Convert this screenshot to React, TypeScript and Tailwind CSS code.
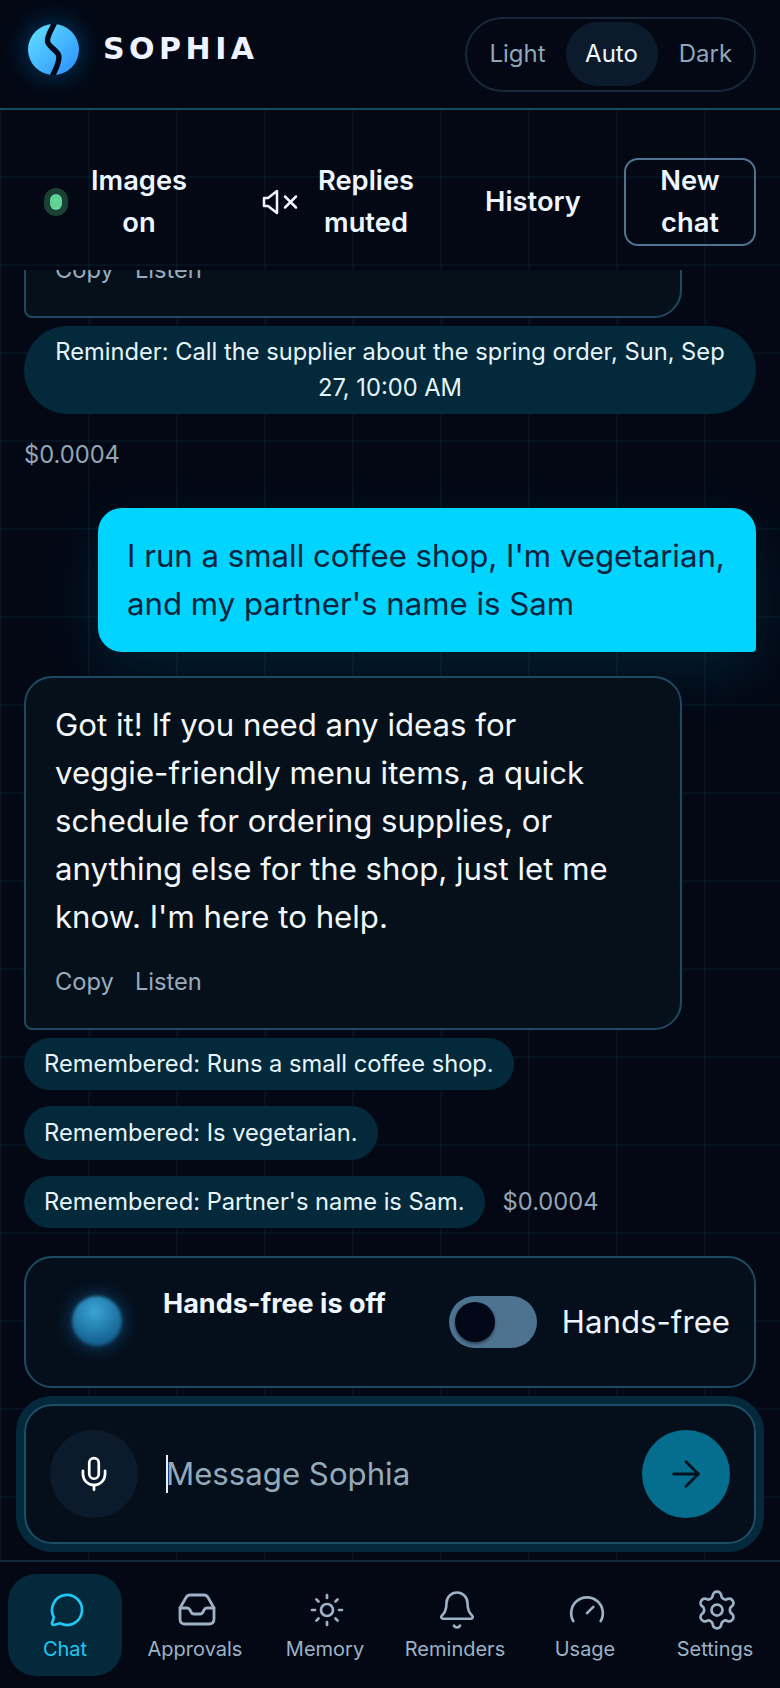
import { MessageCircle, Sun, Bell, Gauge, Settings, Mic, ArrowRight } from "lucide-react";

const font = { fontFamily: "Inter, 'Noto Sans', sans-serif" };

function Logo() {
  return (
    <div className="h-[51px] w-[51px] shrink-0 rounded-full shadow-[0_0_28px_rgba(0,150,255,0.4)]">
      <svg viewBox="0 0 52 52" className="h-full w-full">
        <defs>
          <linearGradient id="orb" x1="0" y1="0" x2="1" y2="1">
            <stop offset="0" stopColor="#63e4ff" />
            <stop offset="1" stopColor="#2a8cff" />
          </linearGradient>
        </defs>
        <circle cx="26" cy="26" r="26" fill="url(#orb)" />
        <path d="M27 -1C24 6 19 12 20 18C21 24 31 27 31.5 33C32 40 28 46 25 53" fill="none" stroke="#03091a" strokeWidth="5.5" />
      </svg>
    </div>
  );
}

function MutedSpeaker() {
  return (
    <svg viewBox="0 0 36 26" fill="none" stroke="currentColor" strokeWidth="2.5" strokeLinecap="round" strokeLinejoin="round" className="h-[26px] w-[36px] shrink-0">
      <path d="M2 9H6L15 2V24L6 17H2Z" />
      <path d="M23 7.5L34 18.5M34 7.5L23 18.5" />
    </svg>
  );
}

function InboxTray({ className }: { className?: string }) {
  return (
    <svg viewBox="0 0 40 34" fill="none" stroke="currentColor" strokeWidth="2.8" strokeLinecap="round" strokeLinejoin="round" className={className}>
      <path d="M3 15L9 4.5Q10.5 2 13 2H27Q29.5 2 31 4.5L37 15V26Q37 31 32 31H8Q3 31 3 26Z" />
      <path d="M3 15H10Q12 15 13 17L14 19Q15 21 17 21H23Q25 21 26 19L27 17Q28 15 30 15H37" />
    </svg>
  );
}

const navItems = [
  { label: "Chat", icon: MessageCircle, size: "h-[36px] w-[36px]", stroke: 1.8, active: true },
  { label: "Approvals", icon: InboxTray, size: "h-[34px] w-[40px]", stroke: 1.7 },
  { label: "Memory", icon: Sun, size: "h-[36px] w-[36px]", stroke: 1.8 },
  { label: "Reminders", icon: Bell, size: "h-[42px] w-[42px]", stroke: 1.5 },
  { label: "Usage", icon: Gauge, size: "h-[38px] w-[38px]", stroke: 1.7 },
  { label: "Settings", icon: Settings, size: "h-[44px] w-[44px]", stroke: 1.5 },
];

function ReplyActions() {
  return (
    <div className="text-[23.7px] leading-8 text-[#98abbd]">
      <span className="mr-[21px]">Copy</span>
      <span>Listen</span>
    </div>
  );
}

export default function App() {
  return (
    <div style={font} className="flex h-[1688px] w-[780px] flex-col overflow-hidden bg-[#030814] bg-[linear-gradient(rgba(32,120,140,0.09)_2px,transparent_2px),linear-gradient(90deg,rgba(32,120,140,0.09)_2px,transparent_2px)] bg-[size:88px_88px] text-white">
      {/* Brand bar */}
      <header className="flex h-[110px] shrink-0 items-center justify-between border-b-2 border-[#154a60] bg-[#030814] pl-7 pr-[24px]">
        <div className="flex items-center gap-[24px] pb-[9px]">
          <Logo />
          <span style={{ fontFamily: "'DejaVu Sans', sans-serif" }} className="-mt-[2px] text-[30px] font-bold leading-none tracking-[4.5px] text-[#eef3ff]">SOPHIA</span>
        </div>
        <div className="flex h-[75px] w-[291px] items-center justify-center gap-[2px] rounded-full border-2 border-[#17283a] pl-[2px] text-[24px] text-[#8fa6ba]">
          <span className="flex h-[64px] w-[92px] items-center justify-center">Light</span>
          <span className="flex h-[64px] w-[92px] items-center justify-center rounded-full bg-[#0c1b2c] text-[#eef6ff]">Auto</span>
          <span className="flex h-[64px] w-[92px] items-center justify-center">Dark</span>
        </div>
      </header>

      {/* Session actions */}
      <div className="flex h-[160px] shrink-0 items-start pl-[44px] pr-[24px] pt-[48px] text-[27.3px] font-semibold leading-[42px] text-[#eef6ff]">
        <div className="flex h-[88px] items-center gap-[23px]">
          <span className="h-7 w-6 rounded-full bg-[#1b4034] p-[6px]">
            <span className="block h-4 w-3 rounded-full bg-[#5fd394]" />
          </span>
          <span className="w-[96px] text-center">Images on</span>
        </div>
        <div className="ml-[75px] flex h-[88px] items-center gap-[20px]">
          <MutedSpeaker />
          <span className="w-[96px] text-center">Replies muted</span>
        </div>
        <div className="ml-[28px] flex h-[88px] flex-1 items-center justify-center">History</div>
        <button className="h-[88px] w-[132px] shrink-0 rounded-[14px] border-2 border-[#4d7390] px-5 font-semibold">New chat</button>
      </div>

      {/* Conversation */}
      <main className="flex min-h-0 flex-1 flex-col justify-end overflow-hidden px-[24px] pb-[28px]">
        <div className="mr-[74px] flex h-[160px] shrink-0 flex-col justify-end rounded-[28px] rounded-bl-[8px] border-2 border-[#1b4a62] bg-[#06101a] px-[29px] pb-[30px]">
          <ReplyActions />
        </div>
        <div className="mt-2 shrink-0 rounded-[44px] bg-[#04293b] px-[30px] py-[8px] text-center text-[23.7px] leading-[36px] text-[#e6f5fb]">
          Reminder: Call the supplier about the spring order, Sun, Sep 27, 10:00 AM
        </div>
        <div className="mt-[25px] shrink-0 text-[23.7px] leading-8 text-[#94a5b5]">$0.0004</div>
        <div className="ml-[74px] mt-[37px] shrink-0 rounded-[24px] rounded-br-[4px] bg-[#00d4ff] px-[29px] py-[24px] text-[31.2px] leading-[48px] text-[#07233d] shadow-[0_20px_60px_rgba(0,170,230,0.14)]">
          I run a small coffee shop, I'm vegetarian, and my partner's name is Sam
        </div>
        <div className="mr-[74px] mt-6 shrink-0 rounded-[28px] rounded-bl-[8px] border-2 border-[#1b4a62] bg-[#06101a] px-[29px] pb-[30px] pt-[23px]">
          <p className="text-[31.2px] leading-[48px] text-[#f2f8fc]">
            Got it! If you need any ideas for <span className="whitespace-nowrap">veggie-friendly</span> menu items, a quick schedule for ordering supplies, or anything else for the shop, just let me know. I'm here to help.
          </p>
          <div className="mt-[25px]">
            <ReplyActions />
          </div>
        </div>
        <div className="mt-2 flex shrink-0 flex-col items-start gap-4 text-[23.7px] leading-9 text-[#e6f5fb]">
          <span className="rounded-full bg-[#04293b] px-5 py-[8px]">Remembered: Runs a small coffee shop.</span>
          <span className="rounded-full bg-[#04293b] px-5 py-[9px]">Remembered: Is vegetarian.</span>
          <div className="flex items-center gap-[18px]">
            <span className="rounded-full bg-[#04293b] px-5 py-[8px]">Remembered: Partner's name is Sam.</span>
            <span className="text-[#94a5b5]">$0.0004</span>
          </div>
        </div>
      </main>

      {/* Hands-free panel */}
      <section className="mx-[24px] flex h-[132px] shrink-0 items-start rounded-[28px] border-2 border-[#1b4a62] bg-[#050f1c] pl-[46px] pr-[24px]">
        <span className="mt-[38px] h-[50px] w-[50px] shrink-0 rounded-full bg-[radial-gradient(circle_at_45%_30%,#3aa5d6,#14608f_75%)] shadow-[0_0_18px_rgba(30,140,210,0.5)] blur-[1.5px]" />
        <span className="ml-[41px] mt-[28px] text-[27px] font-bold leading-9 text-[#eef6ff]">Hands-free is off</span>
        <div className="ml-auto mt-[38px] flex items-center gap-[25px]">
          <span className="flex h-[52px] w-[88px] items-center rounded-full bg-[#4d7390] pl-[6px]">
            <span className="h-[40px] w-[40px] rounded-full bg-[#020817] shadow-[0_2px_3px_rgba(0,0,0,0.4)]" />
          </span>
          <span className="text-[31.2px] leading-[52px] text-[#eef6ff]">Hands-free</span>
        </div>
      </section>

      {/* Composer */}
      <section className="mx-[16px] mt-2 shrink-0 rounded-[36px] border-[8px] border-[#05293c]">
        <div className="flex h-[140px] items-center rounded-[28px] border-2 border-[#1b5068] bg-[#050f1c] px-[24px]">
          <button className="flex h-[88px] w-[88px] shrink-0 items-center justify-center rounded-full bg-[#0c1b2c]">
            <Mic className="h-[38px] w-[38px] text-white" strokeWidth={1.7} />
          </button>
          <div className="ml-[28px] flex h-[38px] flex-1 items-center border-l-2 border-[#e6f0f8] text-[31.2px] text-[#94aab9]">
            <span className="-ml-[2px]">Message Sophia</span>
          </div>
          <button className="flex h-[88px] w-[88px] shrink-0 items-center justify-center rounded-full bg-[#056d8d]">
            <ArrowRight className="h-[42px] w-[42px] text-[#04121f]" strokeWidth={1.6} />
          </button>
        </div>
      </section>

      {/* Bottom navigation */}
      <nav className="mt-2 grid h-[128px] shrink-0 grid-cols-6 items-start border-t-2 border-[#12283c] bg-[#030814] pt-[12px]">
        {navItems.map((item) => {
          const Icon = item.icon;
          return (
            <div key={item.label} className="flex justify-center">
              <div
                className={
                  item.active
                    ? "flex h-[102px] w-[114px] flex-col items-center rounded-[28px] bg-[#03293a] text-[20px] text-[#1fc8f5]"
                    : "flex h-[102px] w-[114px] flex-col items-center text-[20px] text-[#9db2c5]"
                }
              >
                <span className="ml-[3px] flex h-[57px] items-center pt-[15px]">
                  <Icon className={item.size} strokeWidth={item.stroke} />
                </span>
                <span className="mt-[4px] whitespace-nowrap leading-7">{item.label}</span>
              </div>
            </div>
          );
        })}
      </nav>
    </div>
  );
}
